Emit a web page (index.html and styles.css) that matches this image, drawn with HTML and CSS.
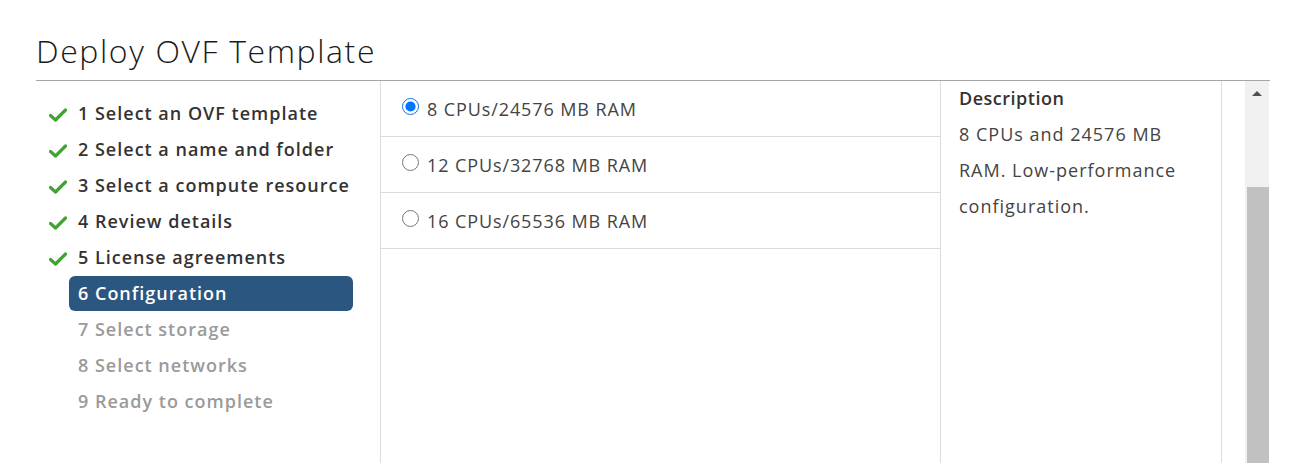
FILE: index.html
```html
<!DOCTYPE html>
<html>
    <head>
        <title>Deploy OVF Template</title>
        <meta charset="UTF-8">
        <link rel="stylesheet" href="styles.css">
    </head>
    <body>
        <div class="wizard">
            <h1 class="wizard_title">Deploy OVF Template</h1>
            <div class="wizard_body">
                <ul class="steps">
                    <li class="step done"><span class="check"></span><span class="step_label">1 Select an OVF template</span></li>
                    <li class="step done"><span class="check"></span><span class="step_label">2 Select a name and folder</span></li>
                    <li class="step done"><span class="check"></span><span class="step_label">3 Select a compute resource</span></li>
                    <li class="step done"><span class="check"></span><span class="step_label">4 Review details</span></li>
                    <li class="step done"><span class="check"></span><span class="step_label">5 License agreements</span></li>
                    <li class="step current"><span class="check"></span><span class="step_label">6 Configuration</span></li>
                    <li class="step todo"><span class="check"></span><span class="step_label">7 Select storage</span></li>
                    <li class="step todo"><span class="check"></span><span class="step_label">8 Select networks</span></li>
                    <li class="step todo"><span class="check"></span><span class="step_label">9 Ready to complete</span></li>
                </ul>
                <form class="options">
                    <label class="option">
                        <input type="radio" name="cfg" checked>
                        <span>8 CPUs/24576 MB RAM</span>
                    </label>
                    <label class="option">
                        <input type="radio" name="cfg">
                        <span>12 CPUs/32768 MB RAM</span>
                    </label>
                    <label class="option">
                        <input type="radio" name="cfg">
                        <span>16 CPUs/65536 MB RAM</span>
                    </label>
                </form>
                <div class="description">
                    <div class="description_title">Description</div>
                    <p>8 CPUs and 24576 MB RAM. Low-performance configuration.</p>
                </div>
                <div class="scroll_gap"></div>
                <div class="scrollbar">
                    <div class="scroll_track"><span class="scroll_arrow"></span></div>
                    <div class="scroll_thumb"></div>
                </div>
            </div>
        </div>
    </body>
</html>
```

FILE: styles.css
```css
body {
    margin: 0;
    background-color: white;
    font-family: "Open Sans", "Liberation Sans", sans-serif;
    color: #333;
}
.wizard {
    padding: 0 30px 0 36px;
    height: 463px;
    display: flex;
    flex-direction: column;
}
.wizard_title {
    margin: 0;
    height: 81px;
    box-sizing: border-box;
    padding-top: 31px;
    font-size: 32px;
    font-weight: 300;
    line-height: 40px;
    letter-spacing: 1.6px;
    color: #1b1b1b;
    border-bottom: 1px solid #a6a6a6;
}
.wizard_body {
    flex: 1;
    display: grid;
    grid-template-columns: 345px 560px 281px 23px 24px;
}
.steps {
    list-style: none;
    margin: 0;
    padding: 14px 0 0 12px;
    border-right: 1px solid #dcdcdc;
}
.step {
    display: flex;
    align-items: center;
    height: 36px;
    font-size: 18px;
    font-weight: 600;
    letter-spacing: 1px;
}
.check {
    width: 21px;
    height: 36px;
    flex: none;
}
.done .check {
    background: no-repeat 1px 13px / 18px 14px url("data:image/svg+xml;utf8,<svg xmlns='http://www.w3.org/2000/svg' viewBox='0 0 18 14'><path d='M1.5 7.5 L6.5 12 L16.5 2' fill='none' stroke='%2340a332' stroke-width='3.2' stroke-linecap='round' stroke-linejoin='round'/></svg>");
}
.step_label {
    flex: none;
    width: 284px;
    height: 35px;
    box-sizing: border-box;
    padding-left: 9px;
    line-height: 35px;
    border-radius: 6px;
}
.current .step_label {
    background-color: #2b5680;
    color: white;
}
.todo .step_label {
    color: #9a9a9a;
}
.options {
    margin: 0;
    border-right: 1px solid #dcdcdc;
}
.option {
    display: flex;
    align-items: center;
    height: 56px;
    box-sizing: border-box;
    padding-left: 21px;
    border-bottom: 1px solid #dcdcdc;
    font-size: 18px;
    letter-spacing: 0.9px;
    color: #444;
}
.option input {
    margin: 0 8px 4px 0;
    width: 17px;
    height: 17px;
    accent-color: #0075ff;
}
.description {
    padding: 0 20px 0 18px;
    font-size: 18px;
    line-height: 36px;
    letter-spacing: 1px;
    color: #444;
    border-right: 1px solid #dcdcdc;
}
.description_title {
    margin-top: -1px;
    font-weight: 600;
    color: #333;
    letter-spacing: 0.5px;
}
.description p {
    margin: 0;
}
.scrollbar {
    display: flex;
    flex-direction: column;
    background-color: #f1f1f1;
}
.scroll_track {
    height: 106px;
    display: flex;
    justify-content: center;
    padding-top: 10px;
    box-sizing: border-box;
}
.scroll_arrow {
    width: 0;
    height: 0;
    border-left: 5px solid transparent;
    border-right: 5px solid transparent;
    border-bottom: 5px solid #505050;
}
.scroll_thumb {
    flex: 1;
    margin-left: 2px;
    background-color: #c1c1c1;
}
```
